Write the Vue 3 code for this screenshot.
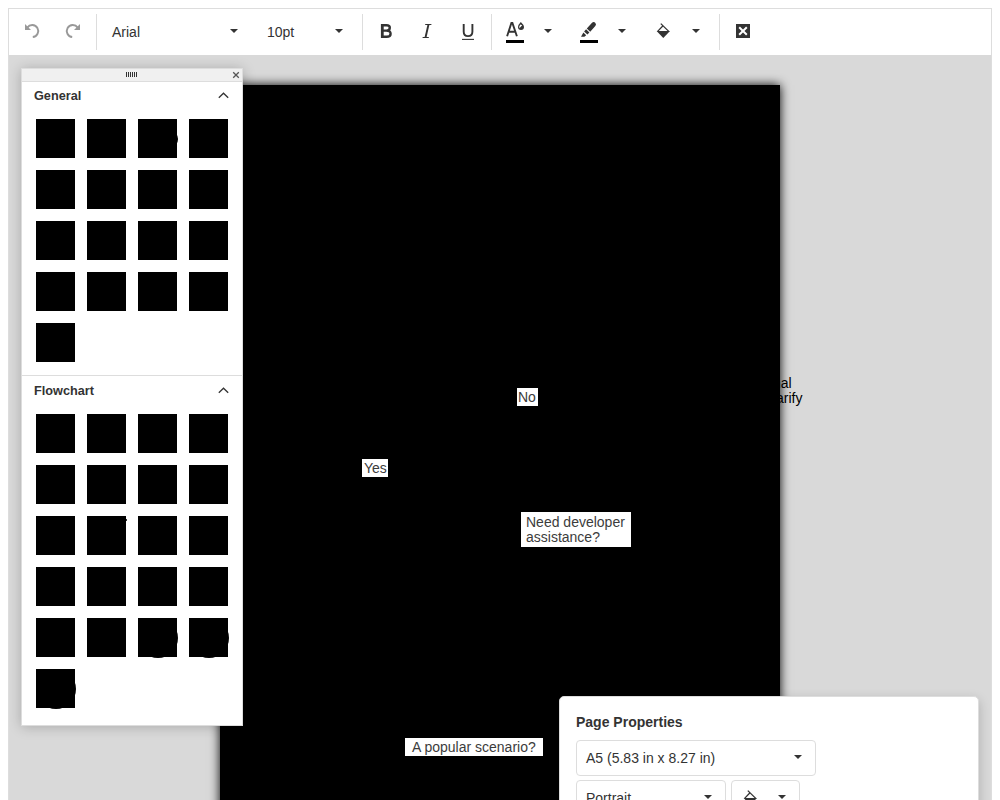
<script setup>
const groups = [
  { title: 'General', count: 17, extras: { 2: 'ellipse' } },
  { title: 'Flowchart', count: 21, extras: { 9: 'tick', 18: 'circle', 19: 'circle', 20: 'circle' } }
]
const bucketLines = 'M5.8 .6 L14 8.6 M8 2.8 L2.6 8.4'
const bucketFill = 'M1.6 8 H15 L8.3 15 Z'
</script>

<template>
  <div class="diagram">
    <div class="toolbar">
      <button class="btn">
        <svg width="18" height="18" viewBox="0 0 18 18"><path d="M4.3 5.6 A6 6 0 1 1 9.8 15" fill="none" stroke="#999" stroke-width="1.9" /><path d="M2 2 V8 H8 Z" fill="#999" /></svg>
      </button>
      <button class="btn">
        <svg width="18" height="18" viewBox="0 0 18 18"><path d="M13.7 5.6 A6 6 0 1 0 8.2 15" fill="none" stroke="#999" stroke-width="1.9" /><path d="M16 2 V8 H10 Z" fill="#999" /></svg>
      </button>
      <i class="sep"></i>
      <div class="select font"><span>Arial</span><b class="caret"></b></div>
      <div class="select size"><span>10pt</span><b class="caret"></b></div>
      <i class="sep"></i>
      <button class="btn">
        <svg width="18" height="18" viewBox="0 0 18 18"><path d="M5 3.2 H9.4 Q12.8 3.2 12.8 5.7 Q12.8 8.6 9.4 8.6 H5.2 M9.4 8.6 Q13.6 8.6 13.6 11.7 Q13.6 14.8 9.6 14.8 H5" fill="none" stroke="#333" stroke-width="2.4" /><path d="M5.3 2 V16" stroke="#333" stroke-width="2.8" /></svg>
      </button>
      <button class="btn">
        <svg width="18" height="18" viewBox="0 0 18 18"><path d="M7.2 2.5 H13.4 M4.6 15.5 H10.8" fill="none" stroke="#333" /><path d="M10.5 2.5 L7.5 15.5" stroke="#333" stroke-width="1.9" /></svg>
      </button>
      <button class="btn">
        <svg width="18" height="18" viewBox="0 0 18 18"><path d="M4.7 2 V9.8 Q4.7 14.1 9 14.1 Q13.4 14.1 13.4 9.8 V2" fill="none" stroke="#333" stroke-width="1.9" /><path d="M3 17.4 H15" stroke="#333" stroke-width="1.1" /></svg>
      </button>
      <i class="sep"></i>
      <div class="split">
        <button class="btn">
          <svg width="20" height="24" viewBox="0 -1 20 24"><path d="M2.1 16.3 L6.4 2.9 H7.4 L11.9 16.3 M3.6 11.7 H10.6" fill="none" stroke="#333" stroke-width="1.9" /><path d="M15.8 1.9 Q19 4.8 19 6.9 A3 3 0 0 1 13 6.9 Q13 4.8 15.8 1.9 Z" fill="#333" /><path d="M15.4 4.6 Q13.7 6.4 14.4 8.2 L17.2 5.2 Z" fill="#fff" /><rect x="1" y="20" width="18" height="3" /></svg>
        </button>
        <b class="caret"></b>
      </div>
      <div class="split">
        <button class="btn">
          <svg width="20" height="24" viewBox="0 -1 20 24"><path d="M12.8 3 Q14.7 1.2 16.4 2.9 Q17.8 4.5 16.1 6.3 L11.2 11.7 L7.8 8.5 Z M7.1 9.3 L10.4 12.5 L8.4 14.6 L5.1 11.5 Z M4.4 12.6 L7.2 15.2 L5.4 16.8 H2 Z" fill="#333" /><rect x="1" y="20" width="18" height="3" /></svg>
        </button>
        <b class="caret"></b>
      </div>
      <div class="split">
        <button class="btn">
          <svg width="16" height="16" viewBox="0 0 16 16"><path :d="bucketLines" fill="none" stroke="#333" stroke-width="1.3" /><path :d="bucketFill" fill="#333" /></svg>
        </button>
        <b class="caret"></b>
      </div>
      <i class="sep"></i>
      <button class="btn">
        <svg width="14" height="14" viewBox="0 0 14 14"><rect width="14" height="14" fill="#333" /><path d="M3.2 3.2 L10.8 10.8 M10.8 3.2 L3.2 10.8" stroke="#fff" stroke-width="2" /></svg>
      </button>
    </div>

    <div class="canvas">
      <div class="page"></div>
      <div class="label no">No</div>
      <div class="label yes">Yes</div>
      <div class="label need">Need developer<br>assistance?</div>
      <div class="label popular">A popular scenario?</div>
      <div class="overflow">nal<br>arify</div>

      <div class="toolbox">
        <div class="handle">
          <svg class="grip" width="11" height="5" viewBox="0 0 11 5"><path d="M.5 0 V5 M2.5 0 V5 M4.5 0 V5 M6.5 0 V5 M8.5 0 V5 M10.5 0 V5" stroke="#333" /></svg>
          <svg class="close" width="6" height="6" viewBox="0 0 6 6"><path d="M.2 .2 L5.8 5.8 M5.8 .2 L.2 5.8" stroke="#555" stroke-width="1.3" /></svg>
        </div>
        <section v-for="g in groups" :key="g.title" class="group">
          <div class="group-title">
            <span>{{ g.title }}</span>
            <svg width="11" height="7" viewBox="0 0 11 7"><path d="M.8 5.8 L5.5 1.2 L10.2 5.8" fill="none" stroke="#333" stroke-width="1.3" /></svg>
          </div>
          <div class="shapes">
            <svg v-for="n in g.count" :key="n" class="shape" width="39" height="39" viewBox="0 0 39 39">
              <rect width="39" height="39" />
              <ellipse v-if="g.extras[n - 1] === 'ellipse'" cx="20" cy="20" rx="20" ry="13" />
              <circle v-if="g.extras[n - 1] === 'circle'" cx="20" cy="20" r="20" />
              <rect v-if="g.extras[n - 1] === 'tick'" x="39" y="3" width="1" height="2" fill="#333" />
            </svg>
          </div>
        </section>
      </div>

      <div class="props">
        <h3>Page Properties</h3>
        <div class="field wide"><span>A5 (5.83 in x 8.27 in)</span><b class="caret"></b></div>
        <div class="row">
          <div class="field half"><span>Portrait</span><b class="caret"></b></div>
          <div class="field color">
            <svg width="16" height="16" viewBox="0 0 16 16"><path :d="bucketLines" fill="none" stroke="#333" stroke-width="1.3" /><path :d="bucketFill" fill="#333" /></svg>
            <b class="caret"></b>
          </div>
        </div>
      </div>
    </div>
  </div>
</template>

<style>
body { overflow: hidden; background: #fff; }
</style>

<style scoped>
* { box-sizing: border-box; }
.diagram {
  margin: 8px 8px 0;
  height: 792px;
  border: 1px solid #ddd;
  border-bottom: 0;
  display: flex;
  flex-direction: column;
  overflow: hidden;
  font-family: "Liberation Sans", Arial, sans-serif;
  font-size: 14px;
  color: #333;
}
.toolbar {
  flex: 0 0 46px;
  display: flex;
  align-items: center;
  gap: 1px;
  padding-left: 3px;
  background: #fff;
}
.btn {
  width: 40px;
  height: 36px;
  padding: 0 0 2px;
  border: 0;
  background: none;
  display: flex;
  align-items: center;
  justify-content: center;
}
.split .btn svg { flex: none; }
.sep { width: 1px; height: 36px; margin: 0 2px; background: #ddd; }
.select { display: flex; align-items: center; justify-content: space-between; padding: 0 16px 0 12px; height: 36px; }
.font { width: 154px; }
.size { width: 104px; }
.caret {
  width: 8px;
  height: 4px;
  margin-bottom: 2px;
  background: #333;
  clip-path: polygon(0 0, 100% 0, 50% 100%);
}
.split { display: flex; align-items: center; width: 73px; }
.split .caret { margin-left: 9px; }
.canvas { position: relative; flex: 1; background: #d9d9d9; overflow: hidden; }
.page {
  position: absolute;
  left: 211px;
  top: 30px;
  width: 560px;
  height: 800px;
  background: #000;
  box-shadow: 0 0 10px #000;
}
.label { position: absolute; background: #fff; line-height: 15px; white-space: nowrap; color: #3c3c3c; }
.no { left: 508px; top: 333px; width: 21px; height: 18px; padding: 2px 0 0 1px; }
.yes { left: 353px; top: 404px; width: 26px; height: 18px; padding: 2px 0 0 2px; }
.need { left: 512px; top: 457px; width: 110px; height: 35px; padding: 3px 0 0 5px; }
.popular { left: 396px; top: 683px; width: 138px; height: 18px; padding: 2px 0 0 7px; }
.overflow { position: absolute; left: 767px; top: 321px; line-height: 15px; white-space: nowrap; color: #000; text-indent: -3px; }
.toolbox {
  position: absolute;
  left: 12px;
  top: 13px;
  width: 222px;
  height: 658px;
  background: #fff;
  border: 1px solid #ddd;
  box-shadow: 0 1px 12px rgba(0, 0, 0, .22);
}
.handle {
  height: 13px;
  background: #f0f0f0;
  border-bottom: 1px solid #ddd;
  display: flex;
  align-items: center;
  padding-right: 3px;
}
.grip { margin: 0 96px 1px 104px; }
.close { flex: none; overflow: visible; }
.group { height: 293px; }
.group + .group { border-top: 1px solid #ddd; padding-top: 1px; height: 350px; }
.group-title {
  height: 28px;
  display: flex;
  align-items: center;
  justify-content: space-between;
  padding: 0 13px 0 12px;
  font-size: 12.7px;
  line-height: 14px;
  font-weight: bold;
}
.group-title svg { margin-bottom: 1px; }
.shapes { display: grid; grid-template-columns: repeat(4, 39px); gap: 12px; padding: 9px 0 0 14px; }
.shape { display: block; overflow: visible; }
.props {
  position: absolute;
  left: 550px;
  top: 641px;
  width: 420px;
  height: 200px;
  padding: 17px 16px;
  background: #fff;
  border: 1px solid #ddd;
  border-radius: 5px;
  box-shadow: 0 4px 12px rgba(0, 0, 0, .2);
}
h3 { margin: 0; height: 26px; line-height: 17px; font-size: 14px; font-weight: bold; }
.field {
  height: 36px;
  border: 1px solid #ddd;
  border-radius: 4px;
  display: flex;
  align-items: center;
  justify-content: space-between;
  padding: 0 13px 0 9px;
}
.wide { width: 240px; }
.row { display: flex; gap: 5px; margin-top: 4px; }
.half { width: 150px; }
.color { width: 69px; padding-left: 10px; }
.color svg { margin-bottom: 1px; }
</style>
